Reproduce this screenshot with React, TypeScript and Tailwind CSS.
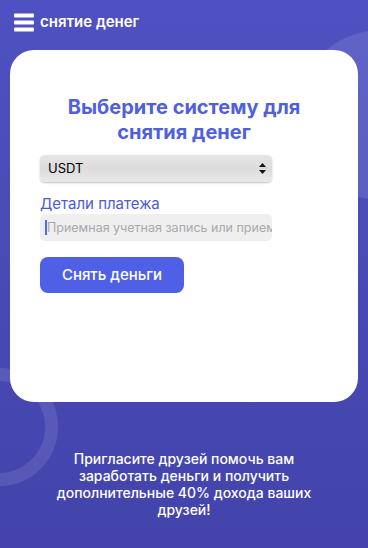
import React from 'react';

export default function App() {
  return (
    <div
      className="relative h-[548px] w-[368px] overflow-hidden bg-gradient-to-b from-[#4f51c2] to-[#4343ab] text-white"
      style={{ fontFamily: 'Inter, "Noto Sans", sans-serif' }}
    >
      {/* decorative shapes */}
      <div className="absolute left-[296px] top-[30px] h-[170px] w-[170px] rounded-full bg-white/10" />
      <div className="absolute left-[-60px] top-[368px] h-[118px] w-[118px] rounded-full border-[13px] border-white/10" />

      <header className="relative flex h-[44px] items-center gap-[6px] px-[14px] pt-[1px]">
        <svg width="20" height="19" viewBox="0 0 20 19">
          <rect x="0" y="0.5" width="20" height="4" rx="1" fill="#fff" />
          <rect x="0" y="7.5" width="20" height="4" rx="1" fill="#fff" />
          <rect x="0" y="14.5" width="20" height="4" rx="1" fill="#fff" />
        </svg>
        <span className="text-[15px] font-semibold">снятие денег</span>
      </header>

      <main className="relative mx-[10px] mt-[6px] flex h-[352px] flex-col rounded-[24px] bg-white px-[30px] pt-[45px]">
        <h1 className="text-center text-[20px] font-bold leading-[25px] text-[#4f5fe0]">
          Выберите систему для
          <br />
          снятия денег
        </h1>
        <div className="relative mt-[10px] flex h-[27px] w-[232px] items-center rounded-[5px] bg-gradient-to-b from-[#e6e6e6] via-[#dcdcdc] to-[#e9e9e9] pl-[8px] text-[13px] text-black shadow-[0_1px_2px_rgba(0,0,0,0.25)]">
          USDT
          <svg className="absolute right-[6px] top-[8px]" width="7" height="11" viewBox="0 0 7 11">
            <path d="M3.5 0 L7 4 L0 4 Z" fill="#111" />
            <path d="M3.5 11 L7 7 L0 7 Z" fill="#111" />
          </svg>
        </div>
        <label className="mt-[13px] text-[15px] leading-[18px] text-[#4a5bd8]">Детали платежа</label>
        <div className="relative mt-[1px] h-[27px] w-[232px]">
          <input
            className="h-full w-full rounded-[5px] bg-[#efefef] pl-[7px] text-[12.5px] text-black outline-none placeholder:text-[#a9a9ad]"
            placeholder="Приемная учетная запись или прием"
          />
          <span className="absolute left-[5px] top-[6px] h-[15px] w-[2px] bg-[#4a6cf7]" />
        </div>
        <button className="mt-[16px] h-[36px] w-[144px] rounded-[8px] bg-[#4f5fe6] text-[15px] font-medium text-white">
          Снять деньги
        </button>
      </main>

      <p className="relative mx-auto mt-[48px] w-[290px] text-center text-[14px] font-medium leading-[17px]">
        Пригласите друзей помочь вам заработать деньги и получить дополнительные 40% дохода ваших друзей!
      </p>
    </div>
  );
}
